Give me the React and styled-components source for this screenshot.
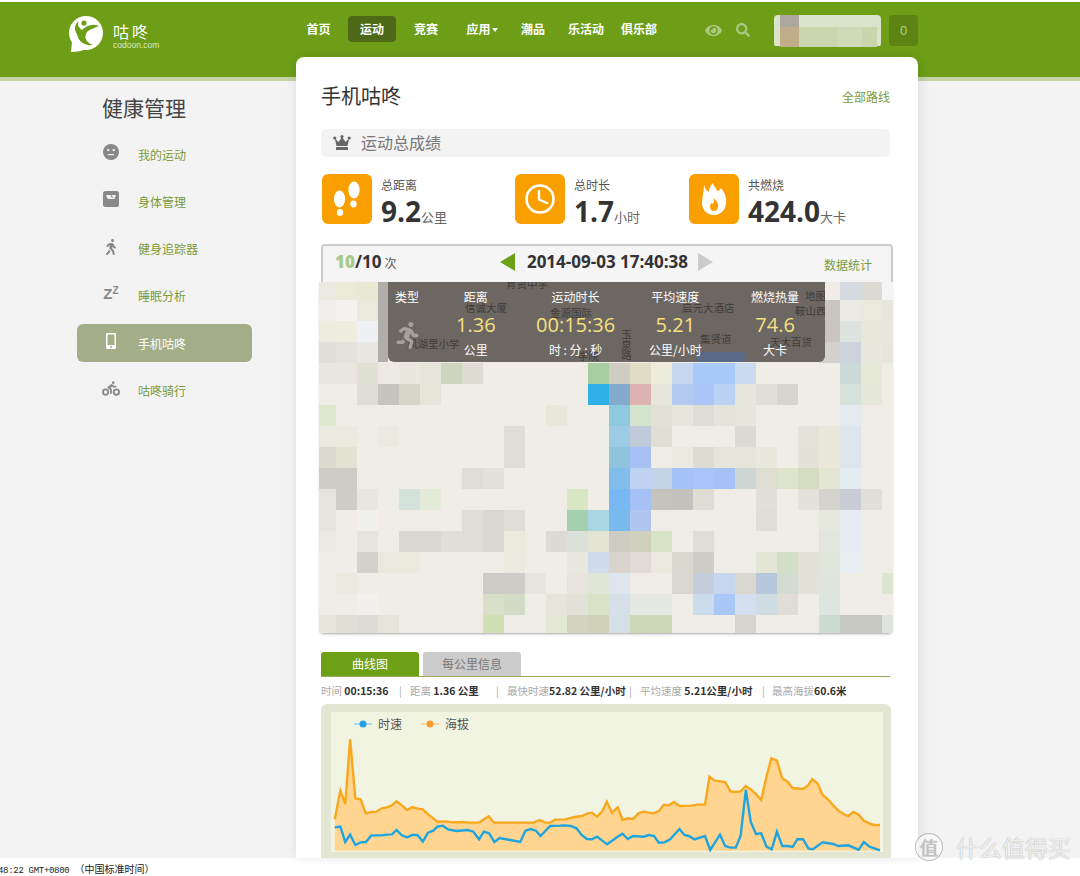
import React from 'react'
import styled, { createGlobalStyle } from 'styled-components'
import { FaEye, FaSearch, FaWalking, FaBiking, FaMobileAlt, FaRunning } from 'react-icons/fa'

const CJK = '"Noto Sans CJK SC", "Liberation Sans", sans-serif'
const GREEN = '#6e9e18'
const LINK = '#7a9a3c'

const GlobalStyle = createGlobalStyle`
    html, body {
        margin: 0;
        padding: 0;
        background: #fff;
        font-family: ${CJK};
    }
`

const Page = styled.div`
    width: 1080px;
    height: 876px;
    padding-top: 2px;
    box-sizing: border-box;
    display: flex;
    flex-direction: column;
    overflow: hidden;
    position: relative;
`

const Header = styled.header`
    flex: none;
    height: 75px;
    background: ${GREEN};
    border-bottom: 4px solid #c3d4a8;
    display: flex;
    align-items: flex-start;
    padding-left: 69px;
`

const Logo = styled.div`
    width: 223px;
    height: 40px;
    margin-top: 14px;
    display: flex;
    gap: 10px;
    color: #fff;
`

const LogoText = styled.div`
    padding-top: 5px;
    font-size: 16px;
    line-height: 20px;
    letter-spacing: 3px;
    small {
        display: block;
        font-family: "Liberation Sans", sans-serif;
        font-size: 8.5px;
        line-height: 8px;
        letter-spacing: 0;
        color: #dce8c6;
    }
`

const Nav = styled.nav`
    display: flex;
    align-items: center;
    height: 26px;
    margin-top: 14px;
`

const NavLink = styled.a`
    width: ${p => p.$w}px;
    height: 26px;
    line-height: 26px;
    text-align: center;
    font-size: 12px;
    font-weight: 700;
    color: #fff;
    box-sizing: border-box;
    ${p => p.$active && `
        background: #4e6a18;
        border-radius: 4px;
        margin: 0 3px;
    `}
`

const Caret = styled.span`
    display: inline-block;
    border: 3px solid transparent;
    border-top: 4px solid #fff;
    border-bottom: none;
    margin-left: 1px;
    vertical-align: 2px;
`

const Tools = styled.div`
    display: flex;
    align-items: center;
    gap: 14px;
    margin: 19px 0 0 44px;
    color: #a9c882;
    font-size: 15px;
    height: 18px;
`

const Avatar = styled.svg`
    display: block;
    margin: 13px 0 0 24px;
    border-radius: 4px;
`

const Counter = styled.div`
    width: 29px;
    height: 31px;
    margin: 13px 0 0 8px;
    background: #5c8412;
    border-radius: 4px;
    color: #b6cf8c;
    font: 13px/31px "Liberation Sans", sans-serif;
    text-align: center;
`

const Body = styled.div`
    flex: 1;
    min-height: 0;
    display: flex;
    background: #f3f3f3;
`

const Sidebar = styled.aside`
    width: 175px;
    margin: 0 44px 0 77px;
`

const SideTitle = styled.h2`
    margin: 11px 0 13px 25px;
    font-size: 21px;
    line-height: 30px;
    font-weight: 400;
    color: #444;
`

const SideItem = styled.a`
    display: flex;
    align-items: center;
    height: 38px;
    margin-bottom: 9.3px;
    padding-left: 25px;
    border-radius: 6px;
    font-size: 12px;
    color: ${p => (p.$active ? '#fff' : LINK)};
    background: ${p => (p.$active ? '#a3ae88' : 'transparent')};
`

const SideIcon = styled.span`
    width: 18px;
    height: 18px;
    margin-right: 18px;
    display: flex;
    align-items: center;
    justify-content: center;
    color: ${p => (p.$active ? '#fff' : '#888')};
    font-size: 16px;
    position: relative;
    top: -2px;
`

const Sleep = styled.span`
    font: 700 15px/18px "Liberation Sans", sans-serif;
    color: #888;
    sup {
        font-size: 10px;
        line-height: 0;
        vertical-align: 5px;
    }
`

const Card = styled.main`
    width: 622px;
    height: 801px;
    margin-top: -24px;
    padding: 0 28px 0 25px;
    box-sizing: border-box;
    background: #fff;
    border-radius: 8px 8px 0 0;
    box-shadow: 4px 0 10px rgba(0, 0, 0, 0.07), -4px 0 10px rgba(0, 0, 0, 0.04);
    position: relative;
    z-index: 1;
`

const TitleRow = styled.div`
    display: flex;
    justify-content: space-between;
    align-items: center;
    height: 30px;
    padding-top: 24px;
    h1 {
        margin: 0;
        font-size: 20px;
        font-weight: 400;
        color: #333;
        position: relative;
        top: -1px;
    }
    a {
        font-size: 12px;
        color: ${LINK};
    }
`

const Section = styled.div`
    display: flex;
    align-items: center;
    gap: 10px;
    height: 28px;
    box-sizing: border-box;
    margin-top: 18px;
    padding: 0 0 2px 12px;
    background: #f3f3f3;
    border-radius: 5px;
    font-size: 16px;
    color: #777;
`

const Stats = styled.div`
    display: grid;
    grid-template-columns: 193px 174px 1fr;
    margin: 17px 0 0 1px;
`

const Stat = styled.div`
    display: flex;
    gap: 9px;
`

const Tile = styled.div`
    width: 50px;
    height: 50px;
    background: #f9a000;
    border-radius: 6px;
    display: flex;
    align-items: center;
    justify-content: center;
`

const StatLabel = styled.div`
    font-size: 12px;
    line-height: 16px;
    margin-top: 3px;
    color: #555;
`

const StatValue = styled.div`
    font: 700 28px/36px "Open Sans", sans-serif;
    color: #333;
    small {
        font: 13px ${CJK};
        color: #666;
    }
`

const Panel = styled.section`
    margin: 15px -3px 0 0;
    height: 31px;
    padding: 0 19px 5px 12px;
    border: 2px solid #ccc;
    border-bottom: none;
    border-radius: 4px 4px 0 0;
    background: #f5f5f5;
    display: grid;
    grid-template-columns: 1fr auto 1fr;
    align-items: center;
`

const Count = styled.div`
    font: 700 17px "Open Sans", sans-serif;
    color: #333;
    b {
        color: #a8c88c;
    }
    small {
        font: 12px ${CJK};
        color: #555;
        margin-left: 3px;
    }
`

const Pager = styled.div`
    display: flex;
    align-items: center;
    gap: 12px;
    font: 700 17px "Open Sans", sans-serif;
    color: #333;
    position: relative;
    left: 3px;
`

const Arrow = styled.span`
    border: 9px solid transparent;
    ${p => (p.$right
        ? 'border-left: 15px solid #ccc; border-right: none; margin-left: -2px;'
        : 'border-right: 15px solid #6ea016; border-left: none;')}
`

const StatsLink = styled.a`
    justify-self: end;
    margin-top: 5px;
    font-size: 12px;
    color: ${LINK};
`

const MapBox = styled.div`
    position: relative;
    width: 574px;
    height: 351px;
    margin-left: -2px;
    border-bottom: 1px solid #c4c4c4;
    border-radius: 0 0 5px 5px;
    box-shadow: 0 1px 2px rgba(0, 0, 0, 0.15);
    overflow: hidden;
    svg {
        display: block;
    }
`

const Strip = styled.div`
    position: absolute;
    left: 59px;
    top: 0;
    width: 10px;
    height: 80px;
    background: #b0aeab;
`

const Overlay = styled.div`
    position: absolute;
    left: 69px;
    top: 0;
    width: 437px;
    height: 80px;
    background: #6c6763;
    border-radius: 0 0 6px 6px;
    overflow: hidden;
    display: grid;
    grid-template-columns: 38px repeat(4, 1fr);
    grid-template-rows: 29px 26px 25px;
    text-align: center;
    align-items: center;
    color: #fff;
    font-size: 12px;
`

const MapLabel = styled.span`
    position: absolute;
    left: ${p => p.$x}px;
    top: ${p => p.$y}px;
    font-size: 10.5px;
    line-height: 12px;
    color: #3f3c39;
    white-space: nowrap;
    ${p => p.$vertical && 'writing-mode: vertical-rl;'}
`

const Cell = styled.span`
    position: relative;
    z-index: 1;
`

const Big = styled(Cell)`
    font: 20px "Open Sans", "Liberation Sans", sans-serif;
    color: #f6e07e;
`

const Runner = styled.span`
    position: absolute;
    left: 6px;
    top: 40px;
    font-size: 27px;
    line-height: 0;
    color: #a5a29e;
`

const Lake = styled.span`
    position: absolute;
    left: 309px;
    top: 70px;
    width: 48px;
    height: 10px;
    background: #5a6a86;
    border-radius: 3px 3px 0 0;
`

const Tabs = styled.div`
    display: flex;
    gap: 4px;
    margin-top: 18px;
    border-bottom: 1px solid #9aab5f;
`

const Tab = styled.a`
    width: 98px;
    height: 24px;
    line-height: 23px;
    text-align: center;
    font-size: 12px;
    border-radius: 3px 3px 0 0;
    color: ${p => (p.$active ? '#fff' : '#777')};
    background: ${p => (p.$active ? '#6ea016' : '#ccc')};
`

const InfoRow = styled.div`
    position: relative;
    display: flex;
    height: 27px;
    align-items: center;
    font-size: 10.5px;
    color: #aaa;
    white-space: nowrap;
    b {
        color: #333;
    }
`

const InfoItem = styled.span`
    position: absolute;
    left: ${p => p.$at}px;
`

const Chart = styled.div`
    position: relative;
    height: 154px;
    margin: 0 -1px 0 0;
    padding: 8px 8px 0 10px;
    box-sizing: border-box;
    background: #e3e6d3;
    border-radius: 6px 6px 0 0;
`

const Plot = styled.div`
    height: 140px;
    background: #f2f4e2;
    svg {
        display: block;
    }
`

const Legend = styled.div`
    position: absolute;
    left: 33px;
    top: 11px;
    display: flex;
    gap: 19px;
    font-size: 12px;
    line-height: 18px;
    color: #555;
`

const LegendItem = styled.span`
    display: flex;
    align-items: center;
    gap: 6px;
`

const StatusBar = styled.div`
    flex: none;
    height: 18px;
    background: #fff;
    font: 9px/27px "Liberation Mono", monospace;
    letter-spacing: -0.3px;
    color: #222;
    white-space: nowrap;
    text-indent: -2px;
    overflow: hidden;
    span {
        font: 10px ${CJK};
        letter-spacing: 0;
    }
`

const Watermark = styled.div`
    position: absolute;
    z-index: 2;
    left: 915px;
    top: 833px;
    display: flex;
    align-items: center;
    gap: 13px;
    font-size: 23px;
    line-height: 28px;
    color: rgba(255, 255, 255, 0.85);
    text-shadow: 0 0 1px rgba(120, 120, 120, 0.8);
`

const Seal = styled.span`
    width: 26px;
    height: 26px;
    border: 1px solid rgba(170, 170, 170, 0.8);
    border-radius: 50%;
    background: rgba(255, 255, 255, 0.5);
    font-size: 18px;
    line-height: 26px;
    text-align: center;
    color: #c4c4c4;
`

const MAP_ROWS = [
    '0:ece9e3 1:ebe9d8 2:e9e8d4 25:d6dbe1 26:dcdad4 27:f4f4f4',
    '0:f0eeea 1:f3f2ef 2:e9eadb 24:c9c6c0 25:eceae4 26:ebe9db 27:e6e6de',
    '0:eeecdf 1:efede0 2:eef0f3 24:c9c6c0 25:dde3de 26:e8e7da 27:e8e8e0',
    '0:e0ded8 1:e4e2da 2:e9e7e2 24:d3d1cb 25:ccd3dc 26:e9e8dc 27:e6e6de',
    '0:e9e7e2 1:e8e6df 2:dfe2d3 3:ebe9e2 4:e9e7de 5:e6e5da 6:cdd5be 7:dedcd2 13:a8cda0 14:cfccc4 15:e0dcc5 16:edecdc 17:c7d7f0 18:a9c9fb 19:a9c9fb 20:cbdaf0 25:cbdad6 26:e6e8d8',
    '2:dedcd4 3:c6c4bf 4:d7d5c8 5:e6e5da 13:2fb0e6 14:86aacb 15:dcb3b0 16:e8e6da 17:b5caf0 18:aac5f6 19:bcd2f5 20:e8e6dc 21:e0ded6 22:d6d4cc 25:d5e2dc 26:e5e8d8',
    '0:dde8cf 11:e9e8da 14:8ec9e0 15:d4e3cc 16:e3e1d6 17:e8e6dc 18:dedcd4 19:e6e4da 20:e8e6dc 25:e2e9ef',
    '0:ebeade 1:ebeade 3:ebeae0 9:dfddd6 14:9ccce5 15:c0cad8 16:e1dfd5 20:dcdad2 23:e5e3d9 24:e9e8da 25:dde6ec',
    '0:dcdbcf 1:e3e2d3 9:dfddd6 14:8fc4dc 15:a6c1f5 17:ebe9e0 18:dedcd2 19:e7e5da 20:e7e5da 21:e9e8dd 23:e3e1d8 24:e9e8da 25:dde6ec',
    '0:cdccc5 1:cdccc5 7:dfddd6 8:e3e1da 14:80bdea 15:c0d2f2 16:c3d3e8 17:a4c2f8 18:a9c4f8 19:a5c1f5 20:cdd6d2 21:dfded2 22:dfe4cc 23:d5dcc2 24:e3e6d4 25:e3ecf0',
    '0:e6e4de 1:cfcdc7 2:e9e8e0 4:d3e2da 5:e4ebd8 12:d7e6c3 14:78b8f3 15:a6c1f5 16:c6c3bc 17:c3c1bb 18:dfddd3 21:e1dfd8 23:e3e1da 24:d5d3cd 25:c9ccd4 26:e1dfd8',
    '0:e6e4de 2:f0f0ec 7:dfddd5 8:d9d7d0 9:dfddd6 12:a5d0af 13:a8d7e3 14:78b9ee 15:b0c6f0 21:dfddd5 24:e6e8dc 25:e5ecf3',
    '0:ece9e2 2:e6e4df 4:d9d7cf 5:d9d7cf 6:e0ded7 7:e0ded7 8:d9d7cf 9:ebe9dc 11:dcdad2 12:dbe0d8 13:e5e3d3 14:cdcbc2 15:cfd1bd 16:d7e3c5 18:dfddd5 24:e3e6dc 25:e5ecf3',
    '2:d3d1cb 3:ebe9dd 4:ebeadc 9:ebeade 12:e9e8df 13:d0dbec 14:d9d5cc 15:e0dcd5 16:ebe9dd 17:d9d7ce 18:cfcdc5 21:e3e6d4 22:d0dfc6 23:e3e1d8 24:e0e6da 25:e9eef2',
    '1:ebeade 8:cdcbc5 9:cfcdc7 10:e6e4de 12:e6e4dc 13:e0e6d6 14:dde6ec 17:d9d7cf 18:c6cedd 19:c8d5ee 20:d9d7d0 21:b8c8dc 22:d3dcd0 23:e3e1d8 24:dfe5dc 27:dce5cf',
    '2:f2f0ec 8:d9dfc8 9:d3dbc6 11:e6e5da 12:e3e2d8 13:d9e2c6 14:d5e0ea 15:e5e8e3 16:e5e8e3 18:ccdcec 19:a9c8f8 20:d3deee 21:d0dce4 22:e0ddd6 24:dde5e0',
    '0:e6e6dc 1:e0dfd5 2:dddbd4 3:e6e5da 8:cfe0b5 11:e3e8d5 12:d3d3c0 13:cfd1b9 14:d5e0e6 15:cdd8b8 16:cdd8b8 20:d6d4cc 24:cddcd0 25:c8c8c2 26:c8c8c2 27:dfe3e0'
]

const ORANGE = '60,538 75,452 88,492 101,298 115,475 129,478 143,520 157,516 171,515 185,505 199,502 211,497 225,484 239,496 253,510 267,501 281,506 295,508 309,523 323,535 334,545 358,544 375,547 400,546 420,548 445,548 458,538 471,529 485,548 510,548 590,548 607,540 621,548 635,548 648,539 675,538 700,531 720,528 735,520 746,518 760,530 773,515 786,485 800,518 815,502 828,540 842,535 856,537 870,520 884,515 898,518 912,520 926,512 938,494 952,496 965,486 980,498 1010,497 1028,494 1048,494 1060,410 1074,422 1088,424 1102,426 1116,454 1130,456 1143,454 1157,438 1170,448 1184,462 1198,480 1212,410 1225,355 1240,362 1254,415 1268,425 1282,444 1310,447 1324,435 1334,418 1348,430 1362,465 1376,478 1390,496 1404,512 1418,522 1430,528 1444,516 1458,524 1472,542 1490,552 1500,555 1515,555'

const BLUE = '60,562 75,560 88,606 101,584 115,615 129,607 143,606 157,587 171,586 185,586 199,584 213,583 225,570 239,586 253,592 267,585 281,585 295,605 309,578 323,572 334,560 348,557 362,568 385,573 415,570 430,575 445,598 458,575 472,580 486,606 500,594 528,600 555,606 569,572 583,567 597,572 609,588 635,558 660,557 675,556 690,558 705,565 719,585 733,597 746,598 760,590 787,613 815,590 828,581 842,597 856,588 885,590 898,585 912,588 925,608 940,607 955,598 980,567 993,585 1005,588 1020,598 1048,588 1062,630 1088,584 1102,618 1116,623 1130,623 1143,588 1157,450 1170,545 1184,582 1198,580 1212,620 1226,628 1240,575 1254,618 1268,618 1282,621 1295,597 1310,598 1324,625 1336,628 1362,607 1390,612 1404,618 1430,616 1458,629 1472,606 1487,620 1500,625 1515,631'

const NAV = [
    { text: '首页', w: 53 },
    { text: '运动', w: 48, active: true },
    { text: '竞赛', w: 54 },
    { text: '应用', w: 58, caret: true },
    { text: '潮品', w: 44 },
    { text: '乐活动', w: 62 },
    { text: '俱乐部', w: 44 }
]

const LogoMark = () => (
    <svg width="34" height="37" viewBox="0 0 34 37">
        <circle cx="17" cy="17" r="17" fill="#fff" />
        <path d="M3 26 L2 36 C8 36 13 35 17 33 Z" fill="#fff" />
        <path d="M30 10 C23 7 17 10 13 14 C9 11 8 8 10 5 C5 8 5 14 8 18 C9 25 15 30 24 29 C18 27 14 22 18 16 C21 13 26 12 30 10 Z" fill={GREEN} />
        <circle cx="15" cy="7" r="2.6" fill={GREEN} />
    </svg>
)

const FaceIcon = () => (
    <svg width="16" height="16" viewBox="0 0 16 16">
        <circle cx="8" cy="8" r="8" fill="#888" />
        <circle cx="5.3" cy="6" r="1.2" fill="#eee" />
        <circle cx="10.7" cy="6" r="1.2" fill="#eee" />
        <path d="M5 10.6 H11" stroke="#eee" strokeWidth="1.2" />
    </svg>
)

const ScaleIcon = () => (
    <svg width="16" height="16" viewBox="0 0 16 16">
        <rect width="16" height="16" rx="2.5" fill="#888" />
        <path d="M3 4 H13 L11.5 8 H4.5 Z" fill="#eee" />
        <path d="M8 4 L9.5 7" stroke="#888" strokeWidth="1" />
    </svg>
)

const CrownIcon = () => (
    <svg width="18" height="15" viewBox="0 0 18 15" fill="#666">
        <circle cx="1.8" cy="3" r="1.6" />
        <circle cx="9" cy="1.6" r="1.6" />
        <circle cx="16.2" cy="3" r="1.6" />
        <path d="M1.8 3.5 L5.5 7 L9 2 L12.5 7 L16.2 3.5 L14.5 11 H3.5 Z" />
        <rect x="3" y="12" width="12" height="3" rx="0.5" />
    </svg>
)

const FeetIcon = () => (
    <svg width="30" height="36" viewBox="0 0 30 36" fill="#fff">
        <ellipse cx="7.5" cy="18" rx="5.6" ry="8.5" />
        <ellipse cx="8" cy="31.5" rx="3.2" ry="3.4" />
        <ellipse cx="22" cy="9" rx="5.6" ry="8.5" />
        <ellipse cx="21.5" cy="23" rx="3.2" ry="3.4" />
    </svg>
)

const ClockIcon = () => (
    <svg width="32" height="32" viewBox="0 0 32 32" fill="none" stroke="#fff">
        <circle cx="16" cy="16" r="13.5" strokeWidth="2.6" />
        <path d="M15 7 V16.5 L24 20.5" strokeWidth="2.4" />
    </svg>
)

const FlameIcon = () => (
    <svg width="26" height="32" viewBox="0 0 26 32">
        <path d="M3 2 C4 6 6 8 8 9 C8 6 9 3 12 0 C13 4 15 4 16 8 C18 8 19 7 20 5 C24 10 26 15 25 21 C24 28 19 32 13 32 C6 32 1 27 1 20 C1 14 3 9 3 2 Z" fill="#fff" />
        <path d="M13 15 C14 18 18 19 17 24 C16.5 27 15 28 13 28 C10.5 28 9 26 9 23.5 C9 22 10 21 10.5 20 C11.5 21 12 21 12.5 20 C13 18 12.5 17 13 15 Z" fill="#f9a000" />
    </svg>
)

const AvatarBlur = () => (
    <Avatar width="107" height="32" viewBox="0 0 107 32" shapeRendering="crispEdges">
        <rect width="107" height="31" fill="#dae4ca" />
        <rect x="6" width="19" height="12" fill="#aca8a0" />
        <rect x="6" y="12" width="19" height="20" fill="#c2ad8a" />
        <rect x="25" y="12" width="39" height="20" fill="#c9d6ae" />
        <rect x="64" y="12" width="24" height="20" fill="#cfdab8" />
        <rect x="88" y="12" width="15" height="20" fill="#c9d5ad" />
    </Avatar>
)

// pixelated map behind the summary overlay
const MapMosaic = () => (
    <svg width="574" height="351" viewBox="0 0 574 351" shapeRendering="crispEdges">
        <rect width="574" height="351" fill="#efede5" />
        {MAP_ROWS.map((row, r) => row.split(' ').map(part => {
            const [col, color] = part.split(':')
            const c = Number(col)
            const x = c === 0 ? 0 : 17 + (c - 1) * 21
            const y = r === 0 ? 0 : 18 + (r - 1) * 21
            return (
                <rect
                    key={`${r}-${c}`}
                    x={x}
                    y={y}
                    width={c === 0 ? 17 : 21}
                    height={r === 0 ? 18 : 21}
                    fill={`#${color}`}
                />
            )
        }))}
    </svg>
)

const ChartLines = () => (
    <svg width="552" height="140" viewBox="50 216 1473 420" preserveAspectRatio="none">
        <polygon points={`60,632 ${ORANGE} 1515,632`} fill="#ffd591" />
        <polyline points={ORANGE} fill="none" stroke="#f8a81c" strokeWidth="2.4" vectorEffect="non-scaling-stroke" />
        <polyline points={BLUE} fill="none" stroke="#1ea5e0" strokeWidth="2.4" vectorEffect="non-scaling-stroke" />
    </svg>
)

const LegendMark = ({ color, line }) => (
    <svg width="18" height="10" viewBox="0 0 18 10">
        <path d="M0 5 H18" stroke={line} strokeWidth="2" />
        <circle cx="9" cy="5" r="3.5" fill={color} />
    </svg>
)

const SIDE_ITEMS = [
    { text: '我的运动', icon: <FaceIcon /> },
    { text: '身体管理', icon: <ScaleIcon /> },
    { text: '健身追踪器', icon: <FaWalking /> },
    { text: '睡眠分析', icon: <Sleep>Z<sup>Z</sup></Sleep> },
    { text: '手机咕咚', icon: <FaMobileAlt />, active: true },
    { text: '咕咚骑行', icon: <FaBiking size={19} /> }
]

const MAP_LABELS = [
    { text: '育贤中学', x: 118, y: -4 },
    { text: '信诚大厦', x: 77, y: 20 },
    { text: '金源国际', x: 162, y: 25 },
    { text: '启元大酒店', x: 294, y: 20 },
    { text: '鞍山西', x: 407, y: 23 },
    { text: '地图', x: 417, y: 8 },
    { text: '风湖里小学', x: 19, y: 56 },
    { text: '集贤道', x: 312, y: 51 },
    { text: '天大百货', x: 382, y: 54 },
    { text: '学院', x: 190, y: 68 },
    { text: '玉泉路', x: 232, y: 47, vertical: true }
]

const App = () => (
    <Page>
        <GlobalStyle />
        <Header>
            <Logo>
                <LogoMark />
                <LogoText>咕咚<small>codoon.com</small></LogoText>
            </Logo>
            <Nav>
                {NAV.map(item => (
                    <NavLink key={item.text} $w={item.w} $active={item.active}>
                        {item.text}{item.caret && <Caret />}
                    </NavLink>
                ))}
            </Nav>
            <Tools>
                <FaEye size={17} />
                <FaSearch size={14} />
            </Tools>
            <AvatarBlur />
            <Counter>0</Counter>
        </Header>
        <Body>
            <Sidebar>
                <SideTitle>健康管理</SideTitle>
                {SIDE_ITEMS.map(item => (
                    <SideItem key={item.text} $active={item.active}>
                        <SideIcon $active={item.active}>{item.icon}</SideIcon>
                        {item.text}
                    </SideItem>
                ))}
            </Sidebar>
            <Card>
                <TitleRow>
                    <h1>手机咕咚</h1>
                    <a>全部路线</a>
                </TitleRow>
                <Section><CrownIcon />运动总成绩</Section>
                <Stats>
                    <Stat>
                        <Tile><FeetIcon /></Tile>
                        <div>
                            <StatLabel>总距离</StatLabel>
                            <StatValue>9.2<small>公里</small></StatValue>
                        </div>
                    </Stat>
                    <Stat>
                        <Tile><ClockIcon /></Tile>
                        <div>
                            <StatLabel>总时长</StatLabel>
                            <StatValue>1.7<small>小时</small></StatValue>
                        </div>
                    </Stat>
                    <Stat>
                        <Tile><FlameIcon /></Tile>
                        <div>
                            <StatLabel>共燃烧</StatLabel>
                            <StatValue>424.0<small>大卡</small></StatValue>
                        </div>
                    </Stat>
                </Stats>
                <Panel>
                    <Count><b>10</b>/10<small>次</small></Count>
                    <Pager><Arrow />2014-09-03 17:40:38<Arrow $right /></Pager>
                    <StatsLink>数据统计</StatsLink>
                </Panel>
                <MapBox>
                    <MapMosaic />
                    <Strip />
                    <Overlay>
                        {MAP_LABELS.map(label => (
                            <MapLabel key={label.text} $x={label.x} $y={label.y} $vertical={label.vertical}>{label.text}</MapLabel>
                        ))}
                        <Lake />
                        <Runner><FaRunning /></Runner>
                        <Cell>类型</Cell>
                        <Cell>距离</Cell>
                        <Cell>运动时长</Cell>
                        <Cell>平均速度</Cell>
                        <Cell>燃烧热量</Cell>
                        <span />
                        <Big>1.36</Big>
                        <Big>00:15:36</Big>
                        <Big>5.21</Big>
                        <Big>74.6</Big>
                        <span />
                        <Cell>公里</Cell>
                        <Cell>时 : 分 : 秒</Cell>
                        <Cell>公里/小时</Cell>
                        <Cell>大卡</Cell>
                    </Overlay>
                </MapBox>
                <Tabs>
                    <Tab $active>曲线图</Tab>
                    <Tab>每公里信息</Tab>
                </Tabs>
                <InfoRow>
                    <InfoItem $at={0}>时间 <b>00:15:36</b></InfoItem>
                    <InfoItem $at={78}>|</InfoItem>
                    <InfoItem $at={89}>距离 <b>1.36 公里</b></InfoItem>
                    <InfoItem $at={175}>|</InfoItem>
                    <InfoItem $at={186}>最快时速<b>52.82 公里/小时</b></InfoItem>
                    <InfoItem $at={308}>|</InfoItem>
                    <InfoItem $at={319}>平均速度 <b>5.21公里/小时</b></InfoItem>
                    <InfoItem $at={441}>|</InfoItem>
                    <InfoItem $at={451}>最高海拔<b>60.6米</b></InfoItem>
                </InfoRow>
                <Chart>
                    <Plot><ChartLines /></Plot>
                    <Legend>
                        <LegendItem><LegendMark color="#2b9fe6" line="#a8d8f4" />时速</LegendItem>
                        <LegendItem><LegendMark color="#f59a30" line="#fbd29c" />海拔</LegendItem>
                    </Legend>
                </Chart>
            </Card>
        </Body>
        <StatusBar>48:22 GMT+0800 <span>（中国标准时间）</span></StatusBar>
        <Watermark>
            <Seal>值</Seal>
            什么值得买
        </Watermark>
    </Page>
)

export default App
